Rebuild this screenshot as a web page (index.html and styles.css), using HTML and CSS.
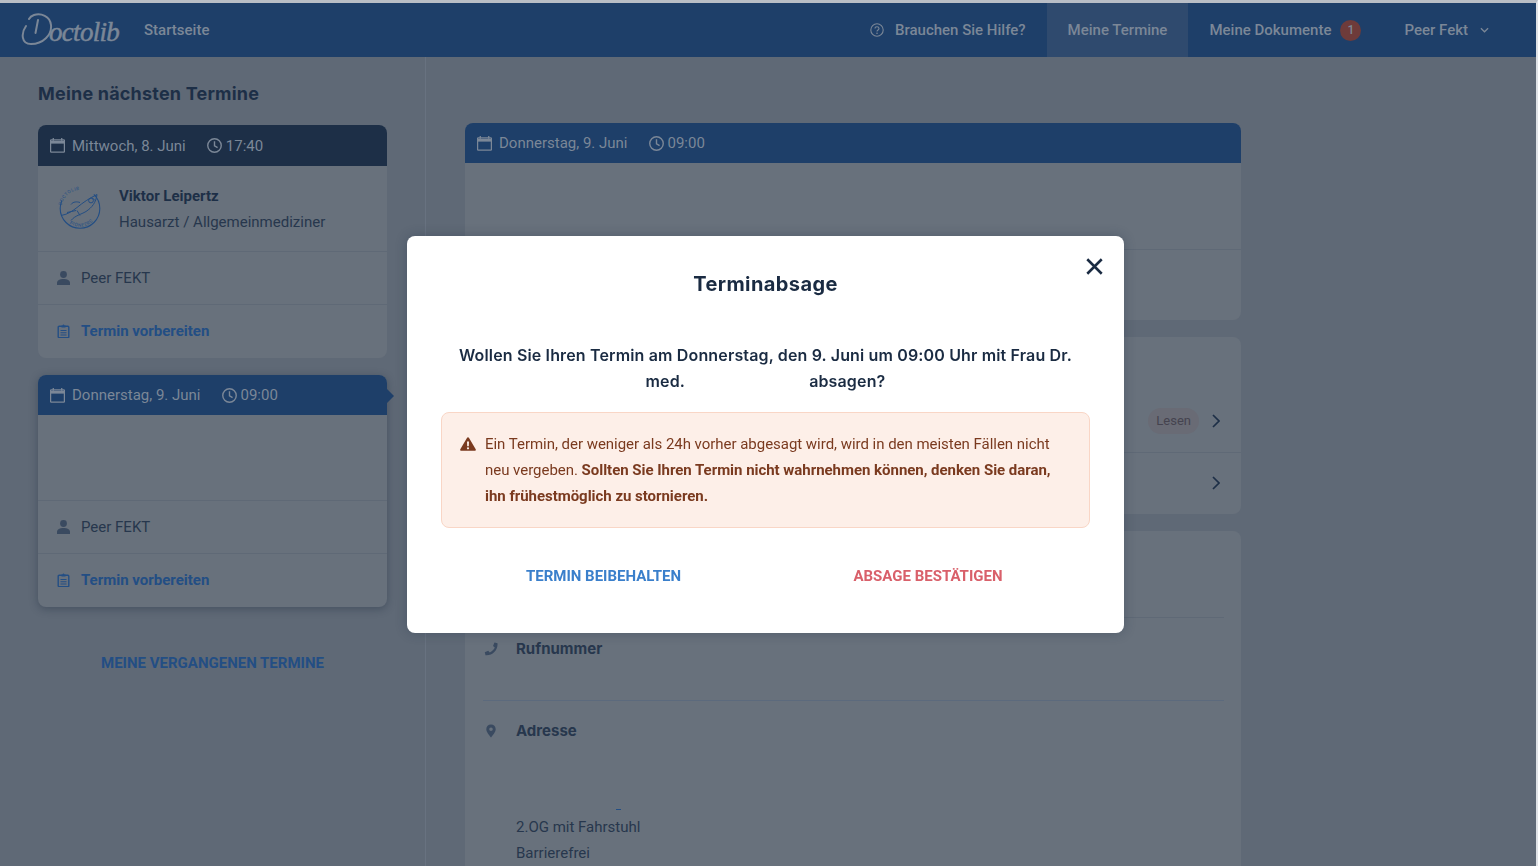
FILE: index.html
```html
<!DOCTYPE html>
<html lang="de">
<head>
    <meta charset="UTF-8">
    <meta name="viewport" content="width=device-width, initial-scale=1.0">
    <title>Doctolib - Meine Termine</title>
    <link rel="stylesheet" href="styles.css">
</head>
<body>
    <svg class="icon-defs" aria-hidden="true">
        <symbol id="i-calendar" viewBox="0 0 16 16"><path d="M3.500 0v3M12.500 0v3" fill="none" stroke="currentColor" stroke-width="1.400"/><path d="M1.300 2h13.400c.4 0 .7.300.7.700v11.600c0 .4-.3.700-.7.700H1.300c-.4 0-.7-.3-.7-.7V2.700c0-.4.300-.7.700-.7z" fill="none" stroke="currentColor" stroke-width="1.400"/><path d="M1 3h14v3H1z" fill="currentColor"/></symbol>
        <symbol id="i-clock" viewBox="0 0 16 16"><circle cx="8" cy="8" r="7.200" fill="none" stroke="currentColor" stroke-width="1.500"/><path d="M8 3.500V8.300l3.300 2" fill="none" stroke="currentColor" stroke-width="1.500"/></symbol>
        <symbol id="i-person" viewBox="0 0 13 14"><circle cx="6.500" cy="3.500" r="3.400" fill="currentColor"/><path d="M0 14v-2.200C0 9.300 2.900 7.900 6.500 7.900s6.500 1.400 6.500 3.900V14z" fill="currentColor"/></symbol>
        <symbol id="i-clipboard" viewBox="0 0 12 14"><path d="M1.600 2.300h8.800c.5 0 .9.400.9.900v9.600c0 .5-.4.900-.9.900H1.600c-.5 0-.9-.4-.9-.9V3.200c0-.5.400-.9.900-.9z" fill="none" stroke="currentColor" stroke-width="1.400"/><path d="M4 1.600h1.100C5.200.9 5.500.4 6 .4s.8.500.9 1.200H8v2H4zM3 6h6v1H3zM3 8.200h6v1H3zM3 10.400h6v1H3z" fill="currentColor"/></symbol>
        <symbol id="i-chevron" viewBox="0 0 8 14"><path d="M1 1l6 6-6 6" fill="none" stroke="currentColor" stroke-width="1.700"/></symbol>
    </svg>

    <header class="navbar">
        <div class="nav-left">
            <a class="logo">
                <svg class="logo-swoosh" viewBox="0 0 32 34" aria-hidden="true"><path d="M5 13C0 20 0 31 10 31 22 31 31 22 30 12 29 3 20 0 13 2 10 3 9 4 8 6M17 7c-1 5-1.500 8-2.500 13" fill="none" stroke="currentColor" stroke-width="2" stroke-linecap="round"/></svg>
                <span class="logo-text">octolib</span>
            </a>
            <a class="nav-link">Startseite</a>
        </div>
        <nav class="nav-right">
            <a class="nav-link nav-help">
                <svg class="help-icon" viewBox="0 0 14 14" aria-hidden="true"><circle cx="7" cy="7" r="6.200" fill="none" stroke="currentColor" stroke-width="1.100"/><path d="M5 5.600C5 4.300 6 3.700 7 3.700s2 .7 2 1.800C9 7 7 7 7 8.500" fill="none" stroke="currentColor" stroke-width="1.100"/><circle cx="7" cy="10.300" r=".8" fill="currentColor"/></svg>
                Brauchen Sie Hilfe?
            </a>
            <a class="nav-link nav-tab active">Meine Termine</a>
            <a class="nav-link nav-tab docs">Meine Dokumente <span class="badge">1</span></a>
            <a class="nav-link nav-user">Peer Fekt
                <svg class="user-chevron" viewBox="0 0 10 6" aria-hidden="true"><path d="M1 1l4 4 4-4" fill="none" stroke="currentColor" stroke-width="1.400"/></svg>
            </a>
        </nav>
    </header>

    <div class="page">
        <aside class="sidebar">
            <h2 class="sidebar-title">Meine nächsten Termine</h2>

            <div class="appt-card">
                <div class="date-bar dark">
                    <svg class="bar-icon"><use href="#i-calendar"/></svg><span class="bar-date">Mittwoch, 8. Juni</span>
                    <svg class="bar-icon clock"><use href="#i-clock"/></svg><span>17:40</span>
                </div>
                <div class="doctor-row">
                    <svg class="pioneer-badge" viewBox="0 1.500 44 44" aria-hidden="true">
                        <defs>
                            <path id="arc-top" d="M3.700 20A18.500 18.500 0 0 1 33 8.200"/>
                            <path id="arc-bottom" d="M8 34.500A18 18 0 0 0 36 34.500"/>
                        </defs>
                        <circle cx="22" cy="23" r="19.800" fill="none" stroke="currentColor" stroke-width="1.100" stroke-dasharray="70 38 16 0"/>
                        <text class="badge-arc"><textPath href="#arc-top">DOCTOLIB</textPath></text>
                        <text class="badge-arc"><textPath href="#arc-bottom" startOffset="5">PIONEERS</textPath></text>
                        <path d="M3 30c7-1 12-5 16-8 6-5 12-9 20-13-1 8-5 13-11 17-5 3-11 4-15 9M13 19c2-3 6-3 9-2M19 25l3 5M34 12l3 3M9 27l9-2" fill="none" stroke="currentColor" stroke-width="1"/>
                        <circle cx="33" cy="15" r="2.400" fill="none" stroke="currentColor" stroke-width="1"/>
                    </svg>
                    <div>
                        <div class="doctor-name">Viktor Leipertz</div>
                        <div class="doctor-spec">Hausarzt / Allgemeinmediziner</div>
                    </div>
                </div>
                <div class="card-row"><svg class="row-icon"><use href="#i-person"/></svg>Peer FEKT</div>
                <div class="card-row link-row"><svg class="row-icon clip"><use href="#i-clipboard"/></svg>Termin vorbereiten</div>
            </div>

            <div class="appt-card selected">
                <div class="date-bar">
                    <svg class="bar-icon"><use href="#i-calendar"/></svg><span class="bar-date">Donnerstag, 9. Juni</span>
                    <svg class="bar-icon clock"><use href="#i-clock"/></svg><span>09:00</span>
                </div>
                <div class="doctor-row"></div>
                <div class="card-row"><svg class="row-icon"><use href="#i-person"/></svg>Peer FEKT</div>
                <div class="card-row link-row"><svg class="row-icon clip"><use href="#i-clipboard"/></svg>Termin vorbereiten</div>
            </div>

            <a class="past-link">MEINE VERGANGENEN TERMINE</a>
        </aside>

        <main class="content">
            <section class="panel">
                <div class="date-bar">
                    <svg class="bar-icon"><use href="#i-calendar"/></svg><span class="bar-date">Donnerstag, 9. Juni</span>
                    <svg class="bar-icon clock"><use href="#i-clock"/></svg><span>09:00</span>
                </div>
                <div class="panel-blank"></div>
                <div class="panel-blank small"></div>
            </section>

            <section class="panel">
                <div class="doc-row first"><span class="pill">Lesen</span><svg class="row-chevron"><use href="#i-chevron"/></svg></div>
                <div class="doc-row"><svg class="row-chevron"><use href="#i-chevron"/></svg></div>
            </section>

            <section class="panel details">
                <div class="detail detail-top"></div>
                <div class="detail detail-phone">
                    <svg class="detail-icon" viewBox="0 0 14 14" aria-hidden="true"><path d="M13.500 1.200L10.500.5 9 4l1.800 1.500C10 7.500 8 9.500 5.800 10.400L4.200 8.700.8 10.200l.7 3c7 .6 12.600-5 12-12z" fill="currentColor"/></svg>
                    <span class="detail-label">Rufnummer</span>
                </div>
                <div class="detail detail-address">
                    <svg class="detail-icon" viewBox="0 0 14 14" aria-hidden="true"><path fill-rule="evenodd" d="M7 .5c2.700 0 4.700 2 4.700 4.700C11.700 8 8.500 11.500 7 13.500 5.500 11.500 2.300 8 2.300 5.200 2.300 2.500 4.300.5 7 .5zm0 3a1.800 1.800 0 1 0 0 3.600 1.800 1.800 0 0 0 0-3.600z" fill="currentColor"/></svg>
                    <span class="detail-label">Adresse</span>
                    <div class="address-lines">
                        <span class="address-dash"></span>
                        <p>2.OG mit Fahrstuhl</p>
                        <p>Barrierefrei</p>
                    </div>
                </div>
            </section>
        </main>
    </div>

    <div class="overlay">
        <div class="modal">
            <button class="modal-close" type="button" aria-label="Schließen">
                <svg viewBox="0 0 16 16" aria-hidden="true"><path d="M1.200 1.200l13.600 13.600M14.800 1.200L1.200 14.800" fill="none" stroke="currentColor" stroke-width="2.400"/></svg>
            </button>
            <h3 class="modal-title">Terminabsage</h3>
            <p class="modal-question">Wollen Sie Ihren Termin am Donnerstag, den 9. Juni um 09:00 Uhr mit Frau Dr. med.<span class="hidden-name"></span>absagen?</p>
            <div class="alert">
                <svg class="alert-icon" viewBox="0 0 16 14" aria-hidden="true"><path fill-rule="evenodd" d="M8 .3c.4 0 .7.2.9.5l6.800 11.500c.4.700-.1 1.500-.9 1.500H1.200c-.8 0-1.300-.8-.9-1.500L7.100.8C7.300.5 7.600.3 8 .3zM7 4.500l.2 4.800h1.600L9 4.500zM8 10.200a1.100 1.100 0 1 0 0 2.200 1.100 1.100 0 0 0 0-2.200z" fill="currentColor"/></svg>
                <p>Ein Termin, der weniger als 24h vorher abgesagt wird, wird in den meisten Fällen nicht neu vergeben. <strong>Sollten Sie Ihren Termin nicht wahrnehmen können, denken Sie daran, ihn frühestmöglich zu stornieren.</strong></p>
            </div>
            <div class="modal-actions">
                <button class="action keep" type="button">TERMIN BEIBEHALTEN</button>
                <button class="action cancel" type="button">ABSAGE BESTÄTIGEN</button>
            </div>
        </div>
    </div>
</body>
</html>
```

FILE: styles.css
```css
* {
    box-sizing: border-box;
}
html, body {
    height: 100%;
}
body {
    margin: 0;
    border-top: 3px solid #b9bec6;
    border-right: 2px solid #dfe2e6;
    background-color: #5f6976;
    color: #1d2f47;
    font-family: Roboto, "Liberation Sans", sans-serif;
    font-size: 15px;
    overflow: hidden;
}
.icon-defs {
    display: none;
}
p {
    margin: 0;
}

/* Kopfzeile */
.navbar {
    display: flex;
    justify-content: space-between;
    height: 54px;
    background-color: #1e3f69;
    color: #7b8797;
}
.nav-left, .nav-right, .nav-link, .logo {
    display: flex;
    align-items: center;
}
.nav-left {
    padding-left: 21px;
}
.logo {
    width: 123px;
    color: #7b8797;
}
.logo-swoosh {
    width: 32px;
    height: 34px;
    margin-right: -4px;
}
.logo-text {
    font-family: "Liberation Serif", serif;
    font-style: italic;
    font-size: 27px;
    letter-spacing: -0.7px;
    line-height: 34px;
    padding-top: 4px;
    -webkit-text-stroke: 0.5px #7b8797;
}
.nav-link {
    font-weight: 500;
    font-size: 15px;
    height: 100%;
}
.nav-right {
    padding-right: 47px;
}
.nav-help {
    margin-right: 21px;
}
.help-icon {
    width: 14px;
    height: 14px;
    margin-right: 11px;
}
.nav-tab {
    padding: 0 21px;
}
.nav-tab.active {
    background-color: #2f4a6e;
}
.docs {
    padding-right: 0;
}
.badge {
    display: flex;
    align-items: center;
    justify-content: center;
    width: 21px;
    height: 21px;
    margin-left: 9px;
    border-radius: 50%;
    background-color: #6e3b3a;
    font-size: 12px;
}
.nav-user {
    margin-left: 43px;
}
.user-chevron {
    width: 9px;
    height: 6px;
    margin-left: 12px;
}

/* Seitenaufbau */
.page {
    display: flex;
    height: calc(100% - 54px);
}
.sidebar {
    width: 426px;
    flex-shrink: 0;
    padding: 26px 38px 0;
    border-right: 1px solid #687280;
}
.sidebar-title {
    margin: 0 0 20px;
    font-family: Inter, "Liberation Sans", sans-serif;
    font-size: 18px;
    font-weight: 700;
    letter-spacing: 0.2px;
    line-height: 22px;
    color: #1d2f47;
}
.appt-card {
    width: 349px;
    margin-bottom: 17px;
    border-radius: 8px;
    background-color: #68717c;
}
.appt-card.selected {
    position: relative;
    box-shadow: 0 2px 8px rgba(20, 35, 55, 0.35);
}
.appt-card.selected::after {
    content: "";
    position: absolute;
    top: 14px;
    right: -7px;
    border-left: 7px solid #1e3f69;
    border-top: 7px solid transparent;
    border-bottom: 7px solid transparent;
}

/* Datumsleiste */
.date-bar {
    display: flex;
    align-items: center;
    height: 40px;
    padding-left: 12px;
    border-radius: 8px 8px 0 0;
    background-color: #1e3f69;
    color: #7b8797;
    font-size: 15px;
    line-height: 40px;
}
.date-bar.dark {
    height: 41px;
    background-color: #1d2f47;
}
.bar-icon {
    width: 15px;
    height: 15px;
    margin-right: 7px;
}
.bar-icon.clock {
    margin-right: 4px;
}
.bar-date {
    margin-right: 21px;
}

/* Zeilen in den Karten */
.doctor-row {
    display: flex;
    align-items: center;
    height: 86px;
    padding-left: 20px;
    border-bottom: 1px solid #5f6976;
}
.pioneer-badge {
    width: 44px;
    height: 48px;
    margin-right: 17px;
    color: #234e84;
}
.badge-arc {
    font-family: Roboto, sans-serif;
    font-size: 4.6px;
    letter-spacing: 0.5px;
    fill: #234e84;
}
.doctor-name {
    font-weight: 700;
    line-height: 26px;
}
.doctor-spec {
    line-height: 26px;
    color: #27374d;
}
.card-row {
    display: flex;
    align-items: center;
    height: 53px;
    padding-left: 19px;
    border-bottom: 1px solid #5f6976;
    color: #27374d;
}
.card-row:last-child {
    border-bottom: 0;
}
.row-icon {
    width: 13px;
    height: 14px;
    margin-right: 11px;
    color: #3a4a60;
}
.row-icon.clip {
    color: #234e84;
}
.link-row {
    padding-bottom: 2px;
    font-weight: 700;
    color: #234e84;
}
.past-link {
    display: block;
    width: 349px;
    margin-top: 47px;
    text-align: center;
    font-size: 15px;
    font-weight: 700;
    color: #234e84;
}

/* Rechte Spalte */
.content {
    flex: 1;
    padding: 66px 0 0 39px;
}
.panel {
    width: 776px;
    margin-bottom: 17px;
    border-radius: 8px;
    background-color: #68717c;
}
.panel-blank {
    height: 87px;
    border-bottom: 1px solid #5f6976;
}
.panel-blank.small {
    height: 70px;
    border-bottom: 0;
}
.doc-row {
    display: flex;
    align-items: center;
    justify-content: flex-end;
    height: 61px;
    padding: 0 21px 2px 0;
}
.doc-row.first {
    height: 116px;
    padding-top: 52px;
    padding-bottom: 0;
    border-bottom: 1px solid #5f6976;
}
.pill {
    margin-right: 13px;
    padding: 0 8px;
    border-radius: 13px;
    background-color: #696b75;
    color: #45434f;
    font-size: 13px;
    line-height: 26px;
}
.row-chevron {
    width: 8px;
    height: 14px;
    color: #1d2f47;
}
.details {
    height: 400px;
    margin-bottom: 0;
    padding: 0 17px 0 18px;
}
.detail-top {
    height: 87px;
    border-bottom: 1px solid #5f6976;
}
.detail-phone {
    display: flex;
    height: 83px;
    padding-top: 22px;
    border-bottom: 1px solid #5c6a7d;
}
.detail-address {
    display: flex;
    flex-wrap: wrap;
    padding-top: 21px;
}
.detail-icon {
    width: 14px;
    height: 14px;
    margin: 2px 18px 0 1px;
    color: #3a4a60;
}
.detail-label {
    font-family: Inter, "Liberation Sans", sans-serif;
    font-size: 15px;
    font-weight: 700;
    line-height: 18px;
    color: #27374d;
}
.address-lines {
    width: 100%;
    padding: 69px 0 0 33px;
    line-height: 26px;
    color: #27374d;
}
.address-dash {
    display: block;
    width: 5px;
    height: 1px;
    margin: 0 0 4px 100px;
    background-color: #234e84;
}

/* Dialog */
.overlay {
    position: fixed;
    top: 3px;
    right: 7px;
    bottom: 0;
    left: 0;
    display: flex;
    align-items: center;
    justify-content: center;
}
.modal {
    position: relative;
    width: 717px;
    height: 397px;
    padding: 34px 34px 0;
    border-radius: 8px;
    background-color: #ffffff;
    box-shadow: 0 0 12px rgba(30, 45, 70, 0.3);
    color: #1a2b42;
}
.modal-close {
    position: absolute;
    top: 22px;
    right: 21px;
    width: 17px;
    height: 17px;
    padding: 0;
    border: 0;
    background: none;
    color: #1a2b42;
}
.modal-close svg {
    display: block;
}
.modal-title {
    margin: 0 0 44px;
    text-align: center;
    font-family: Inter, "Liberation Sans", sans-serif;
    font-size: 20px;
    font-weight: 700;
    letter-spacing: 0.4px;
    line-height: 28px;
}
.modal-question {
    padding: 0 12px;
    text-align: center;
    font-family: Inter, "Liberation Sans", sans-serif;
    font-size: 16px;
    font-weight: 600;
    letter-spacing: 0.15px;
    line-height: 26px;
    margin-bottom: 18px;
}
.hidden-name {
    display: inline-block;
    width: 124px;
}
.alert {
    display: flex;
    height: 116px;
    padding: 18px 30px 0 18px;
    border: 1px solid #f9d6c6;
    border-radius: 8px;
    background-color: #fdefe8;
    color: #7a3a1f;
    letter-spacing: -0.03px;
    line-height: 26px;
}
.alert-icon {
    flex-shrink: 0;
    width: 16px;
    height: 14px;
    margin: 6px 9px 0 0;
}
.modal-actions {
    display: grid;
    grid-template-columns: 325px 1fr;
    margin-top: 34px;
}
.action {
    padding: 0;
    border: 0;
    background: none;
    font-family: Roboto, "Liberation Sans", sans-serif;
    font-size: 15px;
    font-weight: 700;
    line-height: 28px;
    text-align: center;
}
.keep {
    color: #3a7fcb;
}
.cancel {
    color: #d9606a;
}
```
